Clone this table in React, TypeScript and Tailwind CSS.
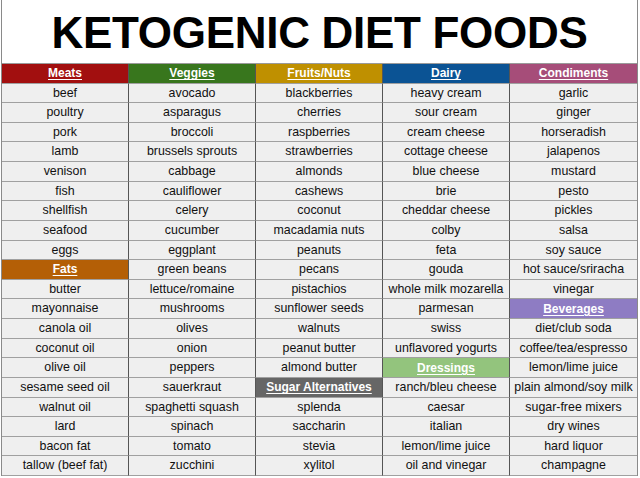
const HEAD: Record<string, string> = {
  Meats: 'bg-[#a20f0f]',
  Veggies: 'bg-[#38761d]',
  'Fruits/Nuts': 'bg-[#bf9000]',
  Dairy: 'bg-[#0b5394]',
  Condiments: 'bg-[#a64d79]',
  Fats: 'bg-[#b45f06]',
  'Sugar Alternatives': 'bg-[#666666]',
  Dressings: 'bg-[#93c47d]',
  Beverages: 'bg-[#8e7cc3]',
}

const COLUMNS: string[][] = [
  ['Meats', 'beef', 'poultry', 'pork', 'lamb', 'venison', 'fish', 'shellfish', 'seafood', 'eggs', 'Fats', 'butter', 'mayonnaise', 'canola oil', 'coconut oil', 'olive oil', 'sesame seed oil', 'walnut oil', 'lard', 'bacon fat', 'tallow (beef fat)'],
  ['Veggies', 'avocado', 'asparagus', 'broccoli', 'brussels sprouts', 'cabbage', 'cauliflower', 'celery', 'cucumber', 'eggplant', 'green beans', 'lettuce/romaine', 'mushrooms', 'olives', 'onion', 'peppers', 'sauerkraut', 'spaghetti squash', 'spinach', 'tomato', 'zucchini'],
  ['Fruits/Nuts', 'blackberries', 'cherries', 'raspberries', 'strawberries', 'almonds', 'cashews', 'coconut', 'macadamia nuts', 'peanuts', 'pecans', 'pistachios', 'sunflower seeds', 'walnuts', 'peanut butter', 'almond butter', 'Sugar Alternatives', 'splenda', 'saccharin', 'stevia', 'xylitol'],
  ['Dairy', 'heavy cream', 'sour cream', 'cream cheese', 'cottage cheese', 'blue cheese', 'brie', 'cheddar cheese', 'colby', 'feta', 'gouda', 'whole milk mozarella', 'parmesan', 'swiss', 'unflavored yogurts', 'Dressings', 'ranch/bleu cheese', 'caesar', 'italian', 'lemon/lime juice', 'oil and vinegar'],
  ['Condiments', 'garlic', 'ginger', 'horseradish', 'jalapenos', 'mustard', 'pesto', 'pickles', 'salsa', 'soy sauce', 'hot sauce/sriracha', 'vinegar', 'Beverages', 'diet/club soda', 'coffee/tea/espresso', 'lemon/lime juice', 'plain almond/soy milk', 'sugar-free mixers', 'dry wines', 'hard liquor', 'champagne'],
]

export default function App() {
  const rows = Array.from({ length: 21 }, (_, r) => COLUMNS.map(col => col[r]))

  return (
    <div className="w-[640px] h-[478px] bg-white font-['Liberation_Sans',Arial,sans-serif]">
      <div className="ml-px w-[637px] border-x border-[#8a8a8a]">
        <div className="h-[63px] flex items-center justify-center pt-[3px]">
          <h1 className="text-[44px] leading-none font-bold text-black tracking-[-0.3px]">KETOGENIC DIET FOODS</h1>
        </div>
        <div className="grid grid-cols-5 grid-rows-[repeat(21,minmax(0,1fr))] h-[413px] border-t border-[#9a9a9a]">
          {rows.map((row, r) =>
            row.map((text, c) => {
              const head = HEAD[text]
              return (
                <div
                  key={`${r}-${c}`}
                  className={`flex items-center justify-center border-b border-b-[#a0a0a0] ${c < 4 ? 'border-r border-r-[#555555]' : ''} ${head ?? 'bg-[#efefef]'}`}
                >
                  {head ? (
                    <span className="text-[12px] font-bold text-white underline underline-offset-2 decoration-1">{text}</span>
                  ) : (
                    <span className="text-[12.4px] text-[#111]">{text}</span>
                  )}
                </div>
              )
            })
          )}
        </div>
      </div>
    </div>
  )
}
